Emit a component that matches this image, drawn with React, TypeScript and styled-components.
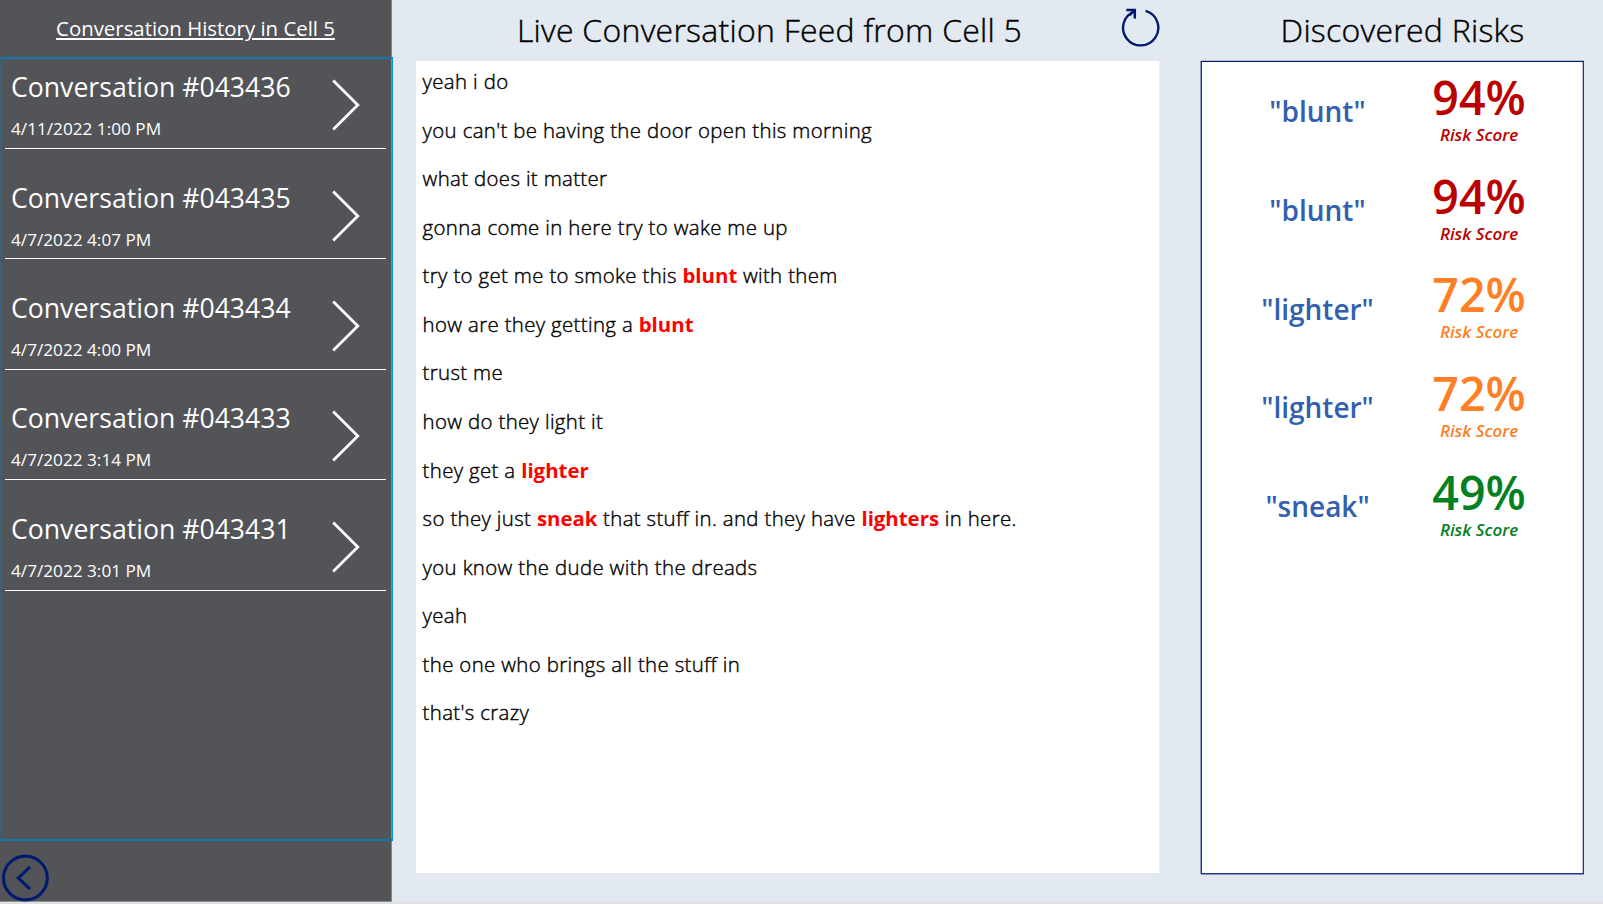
import React from 'react';
import styled, { createGlobalStyle } from 'styled-components';

const NAVY = '#001a6e';

const GlobalStyle = createGlobalStyle`
  * { box-sizing: border-box; }
  body { margin: 0; background: #e0e0e0; }
`;

const Screen = styled.div`
  display: flex;
  width: 1603px;
  height: 904px;
  background: #e2e9f1;
  border-bottom: 2px solid #e0e0e0;
  font-family: 'Open Sans', 'Noto Sans', sans-serif;
  color: #000;
  overflow: hidden;
`;

const Sidebar = styled.aside`
  display: flex;
  flex-direction: column;
  flex: none;
  width: 392px;
  height: 902px;
  background: #535458;
  border-right: 1px solid #85888d;
  border-bottom: 1px solid #8f9094;
  color: #fff;
`;

const SidebarTitle = styled.h2`
  flex: none;
  margin: 0;
  height: 57px;
  line-height: 56px;
  font-size: 20.4px;
  font-weight: 400;
  text-align: center;
  text-decoration: underline;
  text-decoration-thickness: 1.5px;
  text-underline-offset: 2px;
`;

const History = styled.div`
  flex: none;
  width: 393px;
  height: 784px;
  border: 2px solid #0f78ac;
  border-width: 2px 1px;
  border-left-color: #3b6377;
  border-right-color: #0096d6;
  padding-left: 4px;
`;

const HistoryItem = styled.div`
  display: flex;
  justify-content: space-between;
  width: 381px;
  height: 90px;
  margin-bottom: 20.45px;
  padding: 10.1px 26.5px 0 6px;
  border-bottom: 1px solid #fff;
`;

const ItemName = styled.div`
  font-size: 26.63px;
  line-height: 36px;
`;

const ItemDate = styled.div`
  margin-top: 12px;
  font-size: 17.2px;
  line-height: 24px;
`;

const Chevron = styled.svg`
  display: block;
  margin-top: 10px;
  width: 28px;
  height: 52px;
`;

const BackButton = styled.svg`
  display: block;
  margin: 13px 0 0 1px;
  width: 49px;
  height: 48px;
  flex: none;
`;

const FeedColumn = styled.main`
  display: flex;
  flex-direction: column;
  flex: none;
  width: 744px;
  margin-left: 24px;
`;

const Header = styled.header`
  display: flex;
  height: 61px;
`;

const Title = styled.h1<{ $indent?: number }>`
  flex: 1;
  margin: 0;
  padding-left: ${p => p.$indent ?? 0}px;
  font-size: 32px;
  line-height: 59px;
  font-weight: 300;
  letter-spacing: 0.25px;
  -webkit-text-stroke: 0.4px #000;
  text-align: center;
  white-space: nowrap;
`;

const RefreshIcon = styled.svg`
  display: block;
  flex: none;
  margin-top: 6px;
  width: 40px;
  height: 42px;
`;

const FeedPanel = styled.section`
  width: 743px;
  height: 812px;
  padding: 5.3px 6.6px;
  background: #fff;
  box-shadow: 1px 0 #eef2f7;
`;

const Line = styled.p`
  margin: 0 0 18.54px;
  font-size: 20.4px;
  line-height: 30px;
  font-weight: 300;
  letter-spacing: 0.35px;
  -webkit-text-stroke: 0.4px #000;
  white-space: pre;
`;

const Flag = styled.strong`
  font-weight: 700;
  letter-spacing: 0;
  color: #f00;
  -webkit-text-stroke: 0;
`;

const RiskColumn = styled.section`
  flex: none;
  width: 383px;
  margin-left: 41px;
`;

const RiskPanel = styled.div`
  height: 813px;
  padding-top: 10px;
  background: #fff;
  border: 1px solid #26377f;
  border-top-color: #001a6e;
  box-shadow: -1px 0 #8c99c3, 0 -1px #b4c2d8, 0 1px #8794bd, inset -1px 0 #b8c3d8;
`;

const RiskRow = styled.div`
  display: grid;
  grid-template-columns: 231px 92px;
  height: 98.65px;
`;

const RiskWord = styled.div`
  padding-top: 19.3px;
  font-size: 28px;
  line-height: 40px;
  font-weight: 600;
  color: #3260ae;
  text-align: center;
`;

const Score = styled.div<{ $color: string }>`
  display: flex;
  flex-direction: column;
  align-items: center;
  color: ${p => p.$color};
  font-weight: 600;
  white-space: nowrap;
`;

const ScoreValue = styled.div`
  font-size: 46.6px;
  line-height: 50px;
`;

const ScoreLabel = styled.div`
  margin-top: 1px;
  font-size: 17px;
  line-height: 24px;
  font-style: italic;
`;

const conversations = [
  ['043436', '4/11/2022 1:00 PM'],
  ['043435', '4/7/2022 4:07 PM'],
  ['043434', '4/7/2022 4:00 PM'],
  ['043433', '4/7/2022 3:14 PM'],
  ['043431', '4/7/2022 3:01 PM'],
];

// Words wrapped in asterisks are flagged as risky.
const feed = [
  'yeah i do',
  "you can't be having the door open this morning",
  'what does it matter',
  'gonna come in here try to wake me up',
  'try to get me to smoke this *blunt* with them',
  'how are they getting a *blunt*',
  'trust me',
  'how do they light it',
  'they get a *lighter*',
  'so they just *sneak* that stuff in. and they have *lighters* in here.',
  'you know the dude with the dreads',
  'yeah',
  'the one who brings all the stuff in',
  "that's crazy",
];

const risks = [
  { word: 'blunt', score: 94 },
  { word: 'blunt', score: 94 },
  { word: 'lighter', score: 72 },
  { word: 'lighter', score: 72 },
  { word: 'sneak', score: 49 },
];

const riskColor = (score: number) => (score > 90 ? '#bb0000' : score > 60 ? '#ff7f27' : '#038020');

export default function App() {
  return (
    <>
      <GlobalStyle />
      <Screen>
        <Sidebar>
          <SidebarTitle>Conversation History in Cell 5</SidebarTitle>
          <History>
            {conversations.map(([id, date]) => (
              <HistoryItem key={id}>
                <div>
                  <ItemName>Conversation #{id}</ItemName>
                  <ItemDate>{date}</ItemDate>
                </div>
                <Chevron viewBox="0 0 28 52" fill="none" stroke="#fff" strokeWidth="2.8">
                  <path d="M1.2 1.6 25.8 26 1.2 50.4" />
                </Chevron>
              </HistoryItem>
            ))}
          </History>
          <BackButton viewBox="0 0 49 48" fill="none" stroke={NAVY} strokeWidth="3.1">
            <circle cx="24.4" cy="24" r="21.9" />
            <path d="M29.1 12.8 17.2 24l11.9 11.2" />
          </BackButton>
        </Sidebar>

        <FeedColumn>
          <Header>
            <Title $indent={3}>Live Conversation Feed from Cell 5</Title>
            <RefreshIcon viewBox="0 0 40 42" fill="none" stroke={NAVY} strokeWidth="2.4">
              <path d="M25.6 4.9A17.6 17.6 0 1 1 14.6 5.3" />
              <path d="M6.3 4H14.8V12.6" strokeWidth="2.5" />
              <path d="M14.6 4.2 9.4 9.4" />
            </RefreshIcon>
          </Header>
          <FeedPanel>
            {feed.map(text => (
              <Line key={text}>
                {text.split('*').map((part, i) => (i % 2 ? <Flag key={i}>{part}</Flag> : part))}
              </Line>
            ))}
          </FeedPanel>
        </FeedColumn>

        <RiskColumn>
          <Header>
            <Title $indent={20}>Discovered Risks</Title>
          </Header>
          <RiskPanel>
            {risks.map((r, i) => (
              <RiskRow key={i}>
                <RiskWord>"{r.word}"</RiskWord>
                <Score $color={riskColor(r.score)}>
                  <ScoreValue>{r.score}%</ScoreValue>
                  <ScoreLabel>Risk Score</ScoreLabel>
                </Score>
              </RiskRow>
            ))}
          </RiskPanel>
        </RiskColumn>
      </Screen>
    </>
  );
}
